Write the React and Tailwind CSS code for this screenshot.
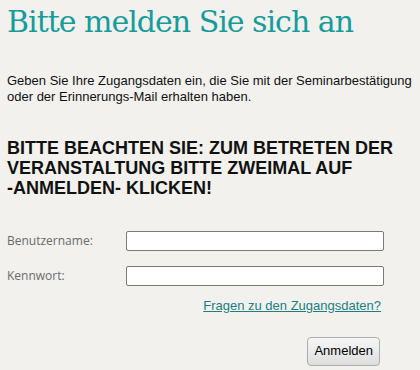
export default function App() {
  return (
    <div className="min-h-[370px] w-[420px] bg-[#f2f1ee] px-[7px] pt-[4px] text-black" style={{ fontFamily: '"Liberation Sans", Arial, sans-serif' }}>
      <h1 className="text-[30px] leading-[36px] text-[#179c9c]" style={{ fontFamily: '"DejaVu Serif", serif', letterSpacing: "-1px" }}>
        Bitte melden Sie sich an
      </h1>
      <p className="mt-[33px] text-[13px] leading-[16px] text-[#111]">
        Geben Sie Ihre Zugangsdaten ein, die Sie mit der Seminarbestätigung oder der Erinnerungs-Mail erhalten haben.
      </p>
      <h2 className="mt-[33px] text-[18px] font-bold leading-[20px] text-[#111]">
        BITTE BEACHTEN SIE: ZUM BETRETEN DER VERANSTALTUNG BITTE ZWEIMAL AUF <span className="whitespace-nowrap">-ANMELDEN-</span> KLICKEN!
      </h2>
      <div className="mt-[33px] w-[377px] text-[12px] text-[#6b6b6b]" style={{ fontFamily: '"Open Sans", sans-serif' }}>
        <div className="flex items-center">
          <label className="w-[119px]">Benutzername:</label>
          <input className="h-[20px] flex-1 rounded-[2px] border border-[#7a7a7a] bg-white" />
        </div>
        <div className="mt-[15px] flex items-center">
          <label className="w-[119px]">Kennwort:</label>
          <input type="password" className="h-[20px] flex-1 rounded-[2px] border border-[#7a7a7a] bg-white" />
        </div>
        <div className="mt-[10px] flex justify-end pr-[3px]">
          <a href="#" className="text-[13px] text-[#1a7f80] underline" style={{ fontFamily: '"Liberation Sans", Arial, sans-serif' }}>
            Fragen zu den Zugangsdaten?
          </a>
        </div>
        <div className="mt-[21px] flex justify-end pr-[4px]">
          <button className="h-[29px] rounded-[4px] border border-[#adadad] bg-gradient-to-b from-[#f6f6f6] to-[#dedede] px-[6px] text-[13px] text-black" style={{ fontFamily: '"Liberation Sans", Arial, sans-serif' }}>
            Anmelden
          </button>
        </div>
      </div>
    </div>
  );
}
